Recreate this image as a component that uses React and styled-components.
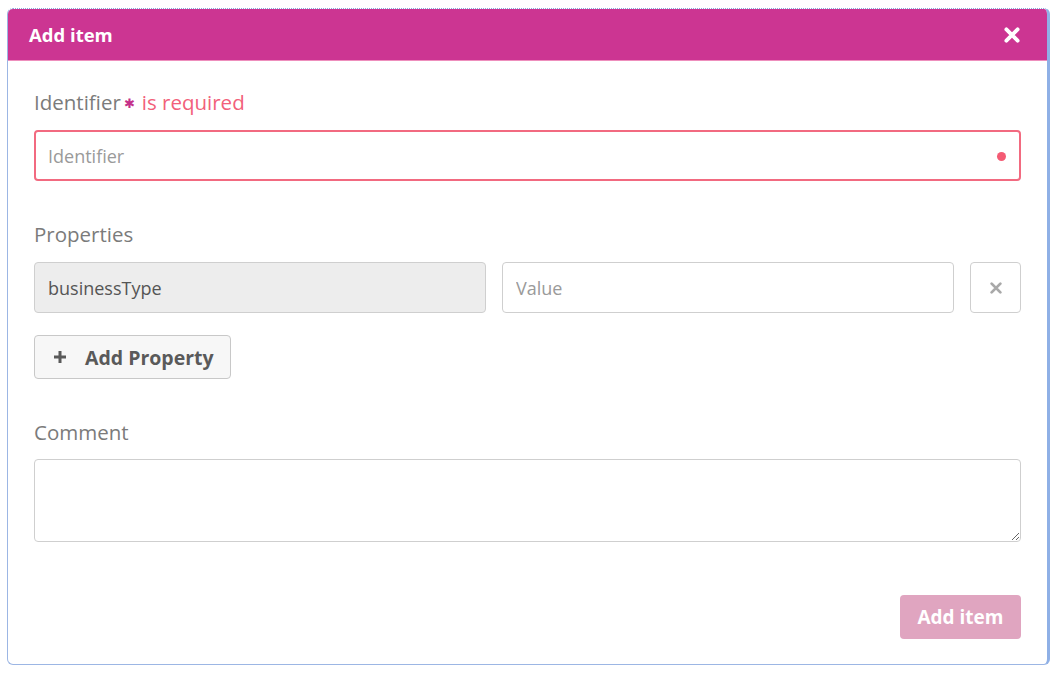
import React from "react";
import styled, { createGlobalStyle } from "styled-components";

const Global = createGlobalStyle`
  html, body { margin: 0; padding: 0; background: #ffffff; }
  body { font-family: "Open Sans", "Noto Sans", sans-serif; }
  * { box-sizing: border-box; }
`;

const Page = styled.div`
  padding: 8px 6px 11px 7px;
  width: 1056px;
`;

const Modal = styled.div`
  border: 1px solid #9cb6e4;
  border-top: 1px dotted #8aa6de;
  border-right: 3px solid #8fb0e6;
  border-radius: 6px;
  overflow: hidden;
  background: #fff;
  height: 657px;
  display: flex;
  flex-direction: column;
`;

const Header = styled.div`
  height: 52px;
  background: #cc3592;
  border-bottom: 1px solid #ee8fbd;
  display: flex;
  align-items: center;
  justify-content: space-between;
  padding: 0 26px 0 21px;
  color: #fff;
`;

const Title = styled.h4`
  margin: 0;
  font-size: 18.5px;
  font-weight: 700;
`;

const Close = styled.button`
  border: 0;
  background: none;
  padding: 0;
  color: #fff;
  display: flex;
  cursor: pointer;
`;

const Body = styled.div`
  flex: 1;
  padding: 28px 26px 0 26px;
  display: flex;
  flex-direction: column;
`;

const Label = styled.label`
  display: flex;
  align-items: center;
  font-size: 20.5px;
  color: #7b7b7b;
  height: 26px;
  margin-bottom: ${(p) => p.$mb || 15}px;
`;

const Star = styled.span`
  color: #c4318a;
  font-size: 13px;
  margin: 0 7px 0 3px;
  position: relative;
  top: 1px;
`;

const Err = styled.span`
  color: #f2607a;
`;

const InputWrap = styled.div`
  position: relative;
  flex: ${(p) => p.$flex || "none"};
`;

const Input = styled.input`
  width: 100%;
  height: 51px;
  border: ${(p) => (p.$error ? "2px solid #f26a80" : "1px solid #cfcfcf")};
  border-radius: 4px;
  padding: 0 ${(p) => (p.$error ? 12 : 13)}px;
  font-family: inherit;
  font-size: 18px;
  color: #555;
  background: ${(p) => (p.readOnly ? "#ededed" : "#fff")};
  outline: none;
  &::placeholder { color: #9a9a9a; }
`;

const Dot = styled.span`
  position: absolute;
  right: 15px;
  top: 50%;
  width: 9px;
  height: 9px;
  margin-top: -4px;
  border-radius: 50%;
  background: #f45b74;
`;

const Row = styled.div`
  display: flex;
  gap: 16px;
  margin-bottom: 22px;
`;

const IconBtn = styled.button`
  width: 51px;
  height: 51px;
  flex: none;
  border: 1px solid #cfcfcf;
  border-radius: 4px;
  background: #fff;
  display: flex;
  align-items: center;
  justify-content: center;
  color: #a9a9a9;
  padding: 0;
`;

const Button = styled.button`
  height: 44px;
  border: 1px solid #c8c8c8;
  border-radius: 4px;
  background: #f7f7f7;
  display: inline-flex;
  align-items: center;
  gap: 18px;
  padding: 0 16px 0 18px;
  font-family: inherit;
  font-size: 19.5px;
  font-weight: 700;
  color: #5a5a5a;
  align-self: flex-start;
`;

const Spacer = styled.div`
  height: ${(p) => p.$h}px;
  flex: none;
`;

const TextArea = styled.textarea`
  width: 100%;
  height: 83px;
  border: 1px solid #cfcfcf;
  border-radius: 4px;
  font-family: inherit;
  font-size: 18px;
  padding: 8px 13px;
  display: block;
`;

const Footer = styled.div`
  display: flex;
  justify-content: flex-end;
  margin-top: 53px;
`;

const Primary = styled.button`
  width: 121px;
  height: 44px;
  border: 0;
  border-radius: 4px;
  background: #e0a5c0;
  color: #fff;
  font-family: inherit;
  font-size: 19px;
  font-weight: 700;
  padding: 0;
`;

const X = ({ size, w }) => (
  <svg width={size} height={size} viewBox="0 0 16 16">
    <path d="M3 3 L13 13 M13 3 L3 13" stroke="currentColor" strokeWidth={w} strokeLinecap="round" />
  </svg>
);

const Plus = () => (
  <svg width="14" height="14" viewBox="0 0 14 14">
    <path d="M7 1 V13 M1 7 H13" stroke="#5a5a5a" strokeWidth="3" />
  </svg>
);

export default function App() {
  return (
    <>
      <Global />
      <Page>
        <Modal>
          <Header>
            <Title>Add item</Title>
            <Close aria-label="close">
              <X size={18} w={3.4} />
            </Close>
          </Header>
          <Body>
            <Label $mb={15}>
              Identifier<Star>✱</Star>
              <Err>is required</Err>
            </Label>
            <InputWrap>
              <Input $error placeholder="Identifier" />
              <Dot />
            </InputWrap>
            <Spacer $h={40} />
            <Label $mb={15}>Properties</Label>
            <Row>
              <InputWrap $flex="1">
                <Input readOnly value="businessType" />
              </InputWrap>
              <InputWrap $flex="1">
                <Input placeholder="Value" />
              </InputWrap>
              <IconBtn aria-label="remove">
                <X size={14} w={3.2} />
              </IconBtn>
            </Row>
            <Button>
              <Plus />
              Add Property
            </Button>
            <Spacer $h={40} />
            <Label $mb={14}>Comment</Label>
            <TextArea />
            <Footer>
              <Primary disabled>Add item</Primary>
            </Footer>
          </Body>
        </Modal>
      </Page>
    </>
  );
}
